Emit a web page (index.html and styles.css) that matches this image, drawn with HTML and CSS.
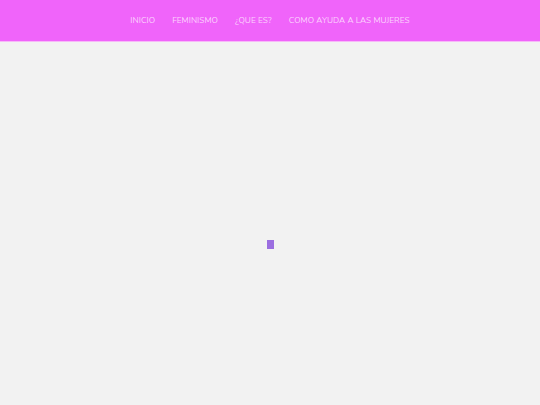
FILE: index.html
```html
<!DOCTYPE html>
<html lang="es">
<head>
<meta charset="utf-8">
<link rel="stylesheet" href="styles.css">
</head>
<body>
<header class="topbar">
  <nav class="menu">
    <a class="menu-item" href="#">INICIO</a>
    <a class="menu-item" href="#">FEMINISMO</a>
    <a class="menu-item" href="#">¿QUE ES?</a>
    <a class="menu-item" href="#">COMO AYUDA A LAS MUJERES</a>
  </nav>
</header>
<main class="stage">
  <div class="loader"></div>
</main>
</body>
</html>
```
FILE: styles.css
```css
html, body {
  margin: 0;
  padding: 0;
  height: 100%;
}
body {
  background: #f2f2f2;
  font-family: "Nunito", "Lato", "Noto Sans", sans-serif;
  display: flex;
  flex-direction: column;
}
.topbar {
  height: 41px;
  background: #f064fa;
  border-bottom: 1px solid #f7b8f9;
  display: flex;
  align-items: center;
  justify-content: center;
}
.menu {
  display: flex;
  gap: 17px;
  margin-top: -1px;
}
.menu-item {
  color: #fcd2fd;
  text-decoration: none;
  font-size: 8.3px;
  letter-spacing: 0.05px;
}
.stage {
  flex: 1;
  display: flex;
  justify-content: center;
  padding-top: 198px;
}
.loader {
  width: 7px;
  height: 9px;
  background: #9b6ee0;
}
```
